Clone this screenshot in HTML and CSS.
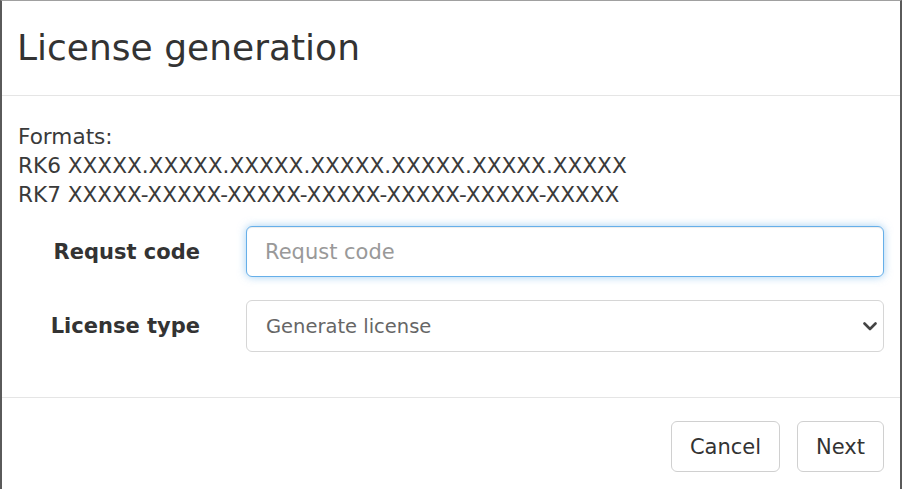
FILE: index.html
```html
<!DOCTYPE html>
<html lang="en">
<head>
<meta charset="utf-8">
<title>License generation</title>
<link rel="stylesheet" href="styles.css">
</head>
<body>
<div class="modal">
  <div class="modal-header">
    <h3 class="modal-title">License generation</h3>
  </div>
  <div class="modal-body">
    <div class="formats">
      <div>Formats:</div>
      <div>RK6 XXXXX.XXXXX.XXXXX.XXXXX.XXXXX.XXXXX.XXXXX</div>
      <div>RK7 XXXXX-XXXXX-XXXXX-XXXXX-XXXXX-XXXXX-XXXXX</div>
    </div>
    <div class="form">
      <div class="form-row">
        <label class="control-label" for="code">Requst code</label>
        <input id="code" class="form-control is-focused" type="text" placeholder="Requst code" autofocus>
      </div>
      <div class="form-row">
        <label class="control-label" for="type">License type</label>
        <span class="select-wrap">
          <select id="type" class="form-control select">
            <option>Generate license</option>
          </select>
          <svg class="chevron" width="14" height="9" viewBox="0 0 14 9" aria-hidden="true"><path d="M1.5 1.5 L7 7 L12.5 1.5" fill="none" stroke="#444" stroke-width="2.6" stroke-linecap="round" stroke-linejoin="round"/></svg>
        </span>
      </div>
    </div>
  </div>
  <div class="modal-footer">
    <button class="btn" type="button">Cancel</button>
    <button class="btn" type="button">Next</button>
  </div>
</div>
</body>
</html>
```

FILE: styles.css
```css
html, body {
  margin: 0;
  padding: 0;
  background: #ffffff;
}

body {
  font-family: "DejaVu Sans", Verdana, sans-serif;
  color: #333333;
  width: 902px;
  height: 489px;
  overflow: hidden;
}

.modal {
  box-sizing: border-box;
  width: 902px;
  height: 489px;
  border-left: 2px solid #5a5a5a;
  border-right: 2px solid #5a5a5a;
  border-top: 1px solid #a0a0a0;
  background: #ffffff;
}

.modal-header {
  height: 95px;
  box-sizing: border-box;
  border-bottom: 1px solid #e5e5e5;
  display: flex;
  align-items: center;
  padding: 0 15px;
}

.modal-title {
  margin: 0;
  font-size: 36px;
  font-weight: normal;
  line-height: 1.1;
  color: #333333;
}

.modal-body {
  padding: 26px 16px 0 16px;
  height: 302px;
  box-sizing: border-box;
  border-bottom: 1px solid #e5e5e5;
}

.formats {
  font-size: 21.6px;
  line-height: 29px;
  color: #3a3a3a;
}

.form {
  margin-top: 17px;
  display: flex;
  flex-direction: column;
  gap: 23px;
}

.form-row {
  display: grid;
  grid-template-columns: 182px 638px;
  column-gap: 46px;
  align-items: center;
}

.control-label {
  font-size: 21px;
  font-weight: bold;
  text-align: right;
  color: #333333;
}

.form-control {
  box-sizing: border-box;
  width: 638px;
  height: 51px;
  padding: 0 18px;
  font-family: "DejaVu Sans", Verdana, sans-serif;
  font-size: 21px;
  color: #555555;
  background: #ffffff;
  border: 1.5px solid #cccccc;
  border-radius: 6px;
  box-shadow: inset 0 1px 1px rgba(0, 0, 0, 0.075);
  outline: none;
}

.form-control::placeholder {
  color: #999999;
}

.form-control.is-focused {
  border-color: #66afe9;
  box-shadow: inset 0 1px 1px rgba(0, 0, 0, 0.075), 0 0 8px rgba(102, 175, 233, 0.6);
}

.select-wrap {
  position: relative;
  display: block;
  width: 638px;
}

.select {
  -webkit-appearance: none;
  appearance: none;
  height: 52px;
  padding-left: 19px;
  font-size: 19.5px;
  color: #666666;
  box-shadow: none;
  border-color: #d6d6d6;
}

.chevron {
  position: absolute;
  right: 7px;
  top: 22px;
  pointer-events: none;
}

.modal-footer {
  display: flex;
  justify-content: flex-end;
  gap: 17px;
  padding: 23px 16px 0 16px;
}

.btn {
  box-sizing: border-box;
  height: 51px;
  padding: 0 18px;
  font-family: "DejaVu Sans", Verdana, sans-serif;
  font-size: 21px;
  color: #333333;
  background: #ffffff;
  border: 1.5px solid #d0d0d0;
  border-radius: 6px;
}
```
